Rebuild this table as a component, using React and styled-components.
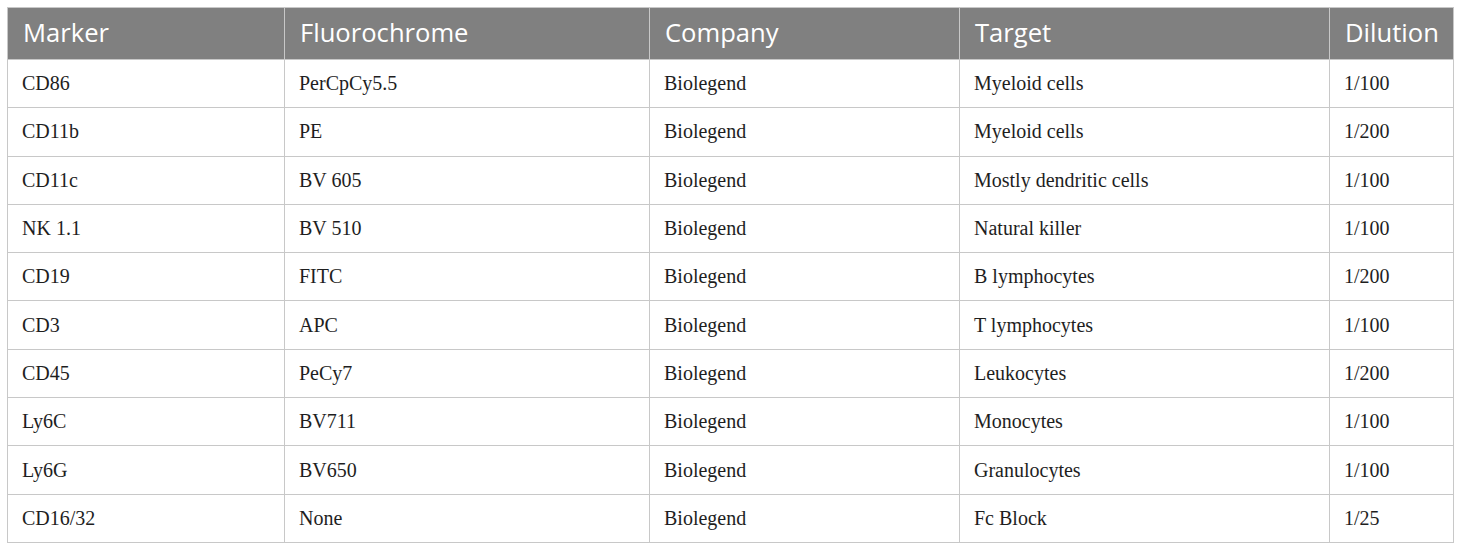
import React from "react";
import styled, { createGlobalStyle } from "styled-components";

const GlobalStyle = createGlobalStyle`
  html, body { margin: 0; padding: 0; background: #ffffff; }
  body { padding: 7px 0 0 7px; }
`;

const Table = styled.table`
  border-collapse: collapse;
  table-layout: fixed;
  width: 1446px;
  border: 1px solid #c8c8c8;
`;

const HeadCell = styled.th`
  background: #808080;
  color: #ffffff;
  font-family: "Open Sans", "Noto Sans", sans-serif;
  font-weight: 400;
  font-size: 25.6px;
  line-height: 1.2;
  text-align: left;
  padding: 0 0 1px 15px;
  height: 50px;
  border-left: 1px solid #c8c8c8;
  border-bottom: 1px solid #c8c8c8;
  white-space: nowrap;
`;

const Cell = styled.td`
  font-family: "Liberation Serif", "Times New Roman", serif;
  font-size: 20px;
  color: #1e1e1e;
  padding: 0 0 0 14px;
  height: 47.3px;
  border: 1px solid #c8c8c8;
  white-space: nowrap;
`;

const columns = [
  { label: "Marker", width: 277 },
  { label: "Fluorochrome", width: 365 },
  { label: "Company", width: 310 },
  { label: "Target", width: 370 },
  { label: "Dilution", width: 124 },
];

const rows = [
  ["CD86", "PerCpCy5.5", "Biolegend", "Myeloid cells", "1/100"],
  ["CD11b", "PE", "Biolegend", "Myeloid cells", "1/200"],
  ["CD11c", "BV 605", "Biolegend", "Mostly dendritic cells", "1/100"],
  ["NK 1.1", "BV 510", "Biolegend", "Natural killer", "1/100"],
  ["CD19", "FITC", "Biolegend", "B lymphocytes", "1/200"],
  ["CD3", "APC", "Biolegend", "T lymphocytes", "1/100"],
  ["CD45", "PeCy7", "Biolegend", "Leukocytes", "1/200"],
  ["Ly6C", "BV711", "Biolegend", "Monocytes", "1/100"],
  ["Ly6G", "BV650", "Biolegend", "Granulocytes", "1/100"],
  ["CD16/32", "None", "Biolegend", "Fc Block", "1/25"],
];

export default function App() {
  return (
    <>
      <GlobalStyle />
      <Table>
        <colgroup>
          {columns.map((c) => (
            <col key={c.label} style={{ width: c.width }} />
          ))}
        </colgroup>
        <thead>
          <tr>
            {columns.map((c) => (
              <HeadCell key={c.label}>{c.label}</HeadCell>
            ))}
          </tr>
        </thead>
        <tbody>
          {rows.map((r, i) => (
            <tr key={i}>
              {r.map((v, j) => (
                <Cell key={j}>{v}</Cell>
              ))}
            </tr>
          ))}
        </tbody>
      </Table>
    </>
  );
}
